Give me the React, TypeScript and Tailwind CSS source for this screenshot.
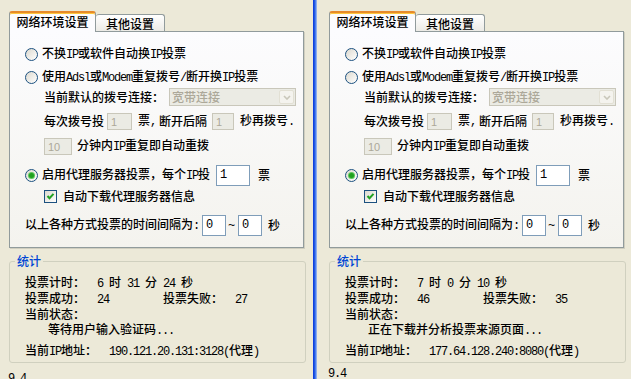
import clsx from "clsx";

// XP-style vote tool, two windows side by side

const ASCII_RUN = /^[\x20-\x7e]+$/;

// Latin runs in a half-width mono face, CJK in Noto
function T({ s, className }: { s: string; className?: string }) {
  const parts = s.split(/([\x20-\x7e]+)/).filter(Boolean);
  return (
    <span className={clsx("whitespace-pre", className)}>
      {parts.map((p, i) =>
        ASCII_RUN.test(p) ? (
          <span
            key={i}
            className="[font-family:'Liberation_Mono',monospace] tracking-[-1.2px]"
          >
            {p}
          </span>
        ) : (
          <span key={i}>{p}</span>
        )
      )}
    </span>
  );
}

function Radio({ checked = false }: { checked?: boolean }) {
  return (
    <span className="inline-flex h-[13px] w-[13px] shrink-0 items-center justify-center rounded-full border border-[#1c5180] bg-gradient-to-br from-[#dcd9cf] to-white">
      {checked && (
        <span className="h-[5px] w-[5px] rounded-full bg-[#21a121] shadow-[0_0_0_1px_#5ec85e]" />
      )}
    </span>
  );
}

function CheckBox() {
  return (
    <span className="inline-flex h-[13px] w-[13px] shrink-0 items-center justify-center border border-[#1c5180] bg-gradient-to-br from-[#dcd9cf] to-white">
      <svg width="9" height="9" viewBox="0 0 9 9">
        <path d="M1.5 4 L3.5 6.2 L7.5 1.8" stroke="#21a121" strokeWidth="2" fill="none" />
      </svg>
    </span>
  );
}

function Edit({
  value,
  className,
  disabled = false,
}: {
  value: string;
  className: string;
  disabled?: boolean;
}) {
  return (
    <span
      className={clsx(
        "inline-flex shrink-0 items-start border pl-[3px] leading-[14px]",
        disabled
          ? "h-[17px] border-[#c9c7ba] bg-[#ebebe4] pt-px text-[#aca899] [font-family:'Liberation_Sans',sans-serif] text-[11px] font-normal"
          : "h-[21px] border-[#7f9db9] bg-white pt-[2px] text-black [font-family:'Liberation_Mono',monospace]",
        className
      )}
    >
      {value}
    </span>
  );
}

function Combo() {
  return (
    <span className="ml-[5px] flex h-[18px] w-[127px] items-center border border-[#c9c7ba] bg-[#ebebe4] pl-[2px] text-[#aca899]">
      <span className="flex-1">宽带连接</span>
      <span className="mr-px flex h-[14px] w-[15px] items-center justify-center rounded-[2px] border border-[#e2e0d4] bg-[#f4f3ee]">
        <svg width="8" height="5" viewBox="0 0 8 5">
          <path d="M1 1 L4 4 L7 1" stroke="#c9c7ba" strokeWidth="1.6" fill="none" />
        </svg>
      </span>
    </span>
  );
}

interface Stats {
  time: string;
  ok: string;
  fail: string;
  state: string;
  ip: string;
}

function Panel({
  stats,
  className,
  versionClass,
}: {
  stats: Stats;
  className: string;
  versionClass: string;
}) {
  return (
    <div className={clsx("shrink-0 pt-[11px]", className)}>
      {/* Tabs */}
      <div className="relative z-10 flex h-[20px] items-end">
        <div className="-mb-px flex h-[21px] w-[87px] items-center justify-center rounded-t-[3px] border-x border-t-2 border-x-[#919b9c] border-t-[#e68b2c] bg-[#fcfcfe] pb-px shadow-[inset_0_1px_0_#ffc73c]">
          网络环境设置
        </div>
        <div className="flex h-[17px] w-[69px] items-center justify-center rounded-t-[3px] border-r border-t border-[#919b9c] bg-gradient-to-b from-white to-[#ecebe6] pt-px">
          其他设置
        </div>
      </div>

      {/* Tab page */}
      <div className="h-[217px] w-[295px] border border-[#919b9c] bg-gradient-to-b from-[#fcfcfe] to-[#f4f3ee] pt-[12px] shadow-[1px_1px_0_#d0cebf]">
        <div className="flex h-[20px] items-center pl-[15px]">
          <Radio />
          <T className="ml-[4px]" s="不换IP或软件自动换IP投票" />
        </div>
        <div className="mt-[3px] flex h-[20px] items-center pl-[15px]">
          <Radio />
          <T className="ml-[4px]" s="使用Adsl或Modem重复拨号/断开换IP投票" />
        </div>
        <div className="flex h-[20px] items-center pl-[34px]">
          <T s="当前默认的拨号连接：" />
          <Combo />
        </div>
        <div className="mt-[4px] flex h-[20px] items-center pl-[34px]">
          <T s="每次拨号投" />
          <Edit disabled value="1" className="ml-[3px] w-[25px]" />
          <T className="ml-[6px]" s="票," />
          <T className="ml-[3px]" s="断开后隔" />
          <Edit disabled value="1" className="ml-[5px] w-[22px]" />
          <T className="ml-[6px]" s="秒再拨号." />
        </div>
        <div className="mt-[5px] flex h-[20px] items-center pl-[34px]">
          <Edit disabled value="10" className="w-[28px]" />
          <T className="ml-[5px]" s="分钟内IP重复即自动重拨" />
        </div>
        <div className="mt-[9px] flex h-[20px] items-center pl-[15px]">
          <Radio checked />
          <T className="ml-[4px]" s="启用代理服务器投票，每个IP投" />
          <Edit value="1" className="ml-[6px] w-[34px]" />
          <T className="ml-[8px]" s="票" />
        </div>
        <div className="mt-px flex h-[20px] items-center pl-[34px]">
          <CheckBox />
          <T className="ml-[6px]" s="自动下载代理服务器信息" />
        </div>
        <div className="mt-[9px] flex h-[20px] items-center pl-[15px]">
          <T s="以上各种方式投票的时间间隔为:" />
          <Edit value="0" className="ml-[3px] h-[20px] w-[24px]" />
          <T className="ml-[2px]" s="~" />
          <Edit value="0" className="ml-[4px] h-[20px] w-[24px]" />
          <T className="ml-[6px]" s="秒" />
        </div>
      </div>

      {/* Stats group */}
      <fieldset className="mt-[7px] w-[297px] rounded-[3px] border border-[#d0d0bf] pb-[4px]">
        <legend className="ml-[5px] px-[2px] leading-[12px] text-[#0046d5]">统计</legend>
        <div className="mt-[7px] pl-[15px]">
          <div className="h-[16px]">
            <T s={`投票计时：  ${stats.time}`} />
          </div>
          <div className="flex h-[16px]">
            <T className="w-[138px]" s={`投票成功：  ${stats.ok}`} />
            <T s={`投票失败：  ${stats.fail}`} />
          </div>
          <div className="h-[15px] leading-[15px]">
            <T s="当前状态：" />
          </div>
          <div className="h-[16px] pl-[23px]">
            <T s={stats.state} />
          </div>
          <div className="mt-[5px] h-[16px]">
            <T s={`当前IP地址：  ${stats.ip}`} />
          </div>
        </div>
      </fieldset>

      <div className={clsx("-ml-px", versionClass)}>
        <T s="9.4" />
      </div>
    </div>
  );
}

export default function App() {
  return (
    <div className="flex h-[379px] w-[631px] overflow-hidden bg-[#ece9d8] text-[12px] font-medium leading-[16px] text-black [font-family:'Noto_Sans_CJK_SC',sans-serif]">
      <Panel
        className="w-[313px] pl-[9px]"
        versionClass="mt-[6px]"
        stats={{
          time: "6 时 31 分 24 秒",
          ok: "24",
          fail: "27",
          state: "等待用户输入验证码...",
          ip: "190.121.20.131:3128(代理)",
        }}
      />
      <div className="w-[4px] shrink-0 bg-gradient-to-r from-[#0831d9] via-[#2a63e8] to-[#a9c1f2]" />
      <Panel
        className="flex-1 pl-[12px]"
        versionClass="mt-px"
        stats={{
          time: "7 时 0 分 10 秒",
          ok: "46",
          fail: "35",
          state: "正在下载并分析投票来源页面...",
          ip: "177.64.128.240:8080(代理)",
        }}
      />
    </div>
  );
}
